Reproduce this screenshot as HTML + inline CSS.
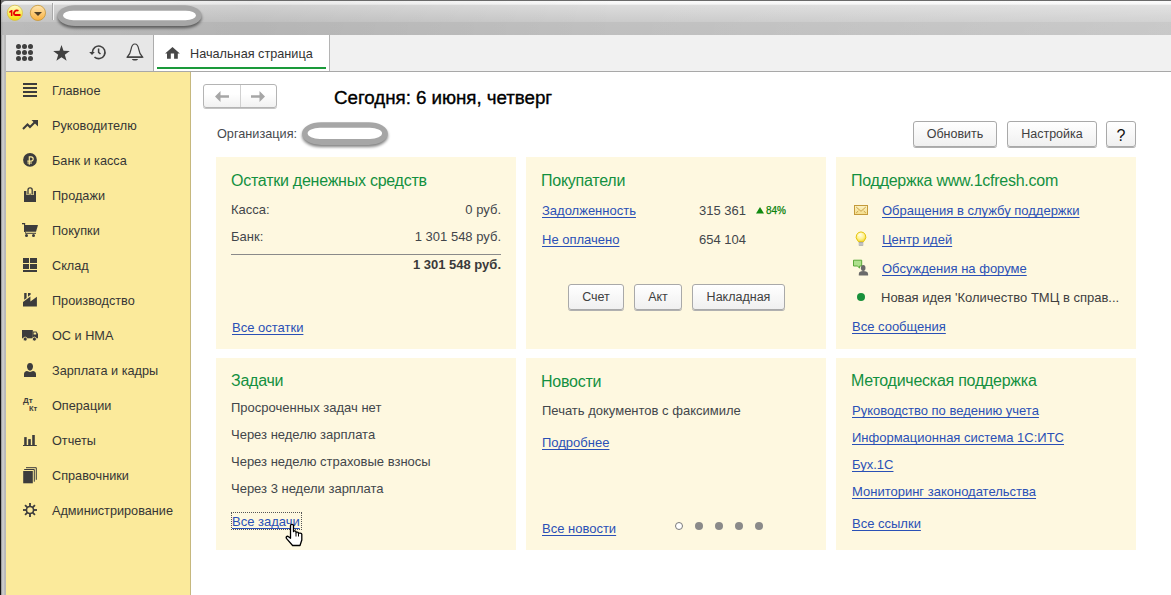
<!DOCTYPE html>
<html><head><meta charset="utf-8">
<style>
*{margin:0;padding:0;box-sizing:border-box}
html,body{width:1171px;height:595px;overflow:hidden;background:#fff;font-family:"Liberation Sans",sans-serif;position:relative}
.a{position:absolute}
.t{position:absolute;white-space:nowrap;line-height:1;font-size:13px;color:#42464b}
.lk{color:#2a50b6;text-decoration:underline;text-underline-offset:2px;text-decoration-skip-ink:none}
.ttl{font-size:16px;letter-spacing:-0.25px;color:#139040}
.card{position:absolute;background:#fef8e0}
.btn{position:absolute;border:1px solid #a9a9a9;border-radius:3px;background:linear-gradient(#ffffff,#f0f0f0);box-shadow:0 1px 0 #b0b0b0;font-size:12.5px;color:#404040;text-align:center;line-height:25px}
.si{position:absolute;left:52px;font-size:12.7px;color:#363636;line-height:1;white-space:nowrap}
</style></head><body>
<!-- window frame -->
<div class="a" style="left:0;top:0;width:1171px;height:35px;background:#6a6a6a"></div>
<div class="a" style="left:1px;top:1px;width:1170px;height:34px;border-top-left-radius:5px;background:linear-gradient(#fafafa 0,#f7f7f7 3px,#dcdcdc 4.5px,#cbcbcb 20.5px,#c1c1c1 21px,#bfbfbf 34px)"></div>
<div class="a" style="left:1px;top:1px;width:1170px;height:34px;border-top-left-radius:5px;background:linear-gradient(90deg,rgba(0,0,0,.03) 0,rgba(0,0,0,.06) 250px,rgba(0,0,0,0) 620px,rgba(255,255,255,.14) 1171px)"></div>
<div class="a" style="left:0;top:0;width:1px;height:595px;background:#141414"></div>
<div class="a" style="left:1px;top:35px;width:5px;height:560px;background:linear-gradient(90deg,#888 0,#c2c2c2 25%,#d0d0d0 45%,#bcbcbc 65%,#b6b6b6 100%)"></div>
<div class="a" style="left:1px;top:5px;width:2px;height:30px;background:linear-gradient(90deg,rgba(0,0,0,.12),rgba(0,0,0,0))"></div>
<!-- title bar elements -->
<svg class="a" style="left:6px;top:4px" width="44" height="18" viewBox="0 0 44 18">
<defs><linearGradient id="gy" x1="0" y1="0" x2="0" y2="1"><stop offset="0" stop-color="#fffbd0"/><stop offset="0.5" stop-color="#fbef60"/><stop offset="1" stop-color="#f5dc00"/></linearGradient>
<linearGradient id="go" x1="0" y1="0" x2="0" y2="1"><stop offset="0" stop-color="#ffe6b0"/><stop offset="1" stop-color="#f9b040"/></linearGradient></defs>
<circle cx="8.9" cy="8.8" r="7.6" fill="url(#gy)" stroke="#d6be48" stroke-width="0.8"/>
<path fill="#e80000" d="M3.2 7.5 L5.4 6 H6.4 V12 H4.9 V8.2 L3.6 9Z"/>
<path fill="none" stroke="#e80000" stroke-width="1.7" d="M8.6 11.2 A3 3 0 0 1 12.5 6.8"/>
<rect x="8.5" y="10" width="6" height="2" fill="#e80000"/>
<circle cx="31.9" cy="8.9" r="7.6" fill="url(#go)" stroke="#c49434" stroke-width="0.8"/>
<path fill="#4e3e26" d="M28 8 H36 L32 12Z"/>
</svg>
<div class="a" style="left:52px;top:3px;width:1px;height:17px;background:#a8a8a8"></div>
<div class="a" style="left:53px;top:3px;width:1px;height:17px;background:#f4f4f4"></div>
<svg class="a" style="left:54px;top:1px" width="152" height="35" viewBox="0 0 152 35"><defs><filter id="sh54" x="-10%" y="-30%" width="120%" height="170%"><feGaussianBlur stdDeviation="1.5"/></filter></defs><path d="M21.18 4.20 H129.92 A17.68 10.40 0 0 1 129.92 25.00 H21.18 A17.68 10.40 0 0 1 21.18 4.20Z" fill="#000" opacity=".5" transform="translate(0 2.2)" filter="url(#sh54)"/><path d="M21.18 4.20 H129.92 A17.68 10.40 0 0 1 129.92 25.00 H21.18 A17.68 10.40 0 0 1 21.18 4.20Z" fill="#a6a6a6"/><path d="M19.45 9.70 H131.55 A10.45 4.75 0 0 1 131.55 19.20 H19.45 A10.45 4.75 0 0 1 19.45 9.70Z" fill="#fff"/></svg>
<!-- toolbar -->
<div class="a" style="left:6px;top:35px;width:1165px;height:36px;background:#f1f1f1"></div>
<div class="a" style="left:6px;top:35px;width:147px;height:36px;background:#e7e7e7"></div>
<div class="a" style="left:6px;top:71px;width:1165px;height:1px;background:#a8a8a8"></div>
<div class="a" style="left:153px;top:35px;width:1px;height:36px;background:#acacac"></div>
<div class="a" style="left:154px;top:35px;width:175px;height:36px;background:#fff"></div>
<div class="a" style="left:329px;top:35px;width:1px;height:36px;background:#b4b4b4"></div>
<div class="a" style="left:157px;top:67px;width:169px;height:2px;background:#1a9a3a"></div>
<div class="t" style="left:190px;top:48px;font-size:12.7px;color:#333">Начальная страница</div>
<!-- toolbar icons -->
<svg class="a" style="left:16px;top:44px" width="17" height="17" viewBox="0 0 17 17"><g fill="#404040"><circle cx="2.5" cy="2.5" r="2.5"/><circle cx="8.5" cy="2.5" r="2.5"/><circle cx="14.5" cy="2.5" r="2.5"/><circle cx="2.5" cy="8.5" r="2.5"/><circle cx="8.5" cy="8.5" r="2.5"/><circle cx="14.5" cy="8.5" r="2.5"/><circle cx="2.5" cy="14.5" r="2.5"/><circle cx="8.5" cy="14.5" r="2.5"/><circle cx="14.5" cy="14.5" r="2.5"/></g></svg>
<svg class="a" style="left:53px;top:45px" width="17" height="16" viewBox="0 0 17 16"><path fill="#404040" d="M8.5 0 L10.5 5.8 L16.8 5.9 L11.8 9.7 L13.6 15.8 L8.5 12.2 L3.4 15.8 L5.2 9.7 L0.2 5.9 L6.5 5.8Z"/></svg>
<svg class="a" style="left:86px;top:42px" width="24" height="20" viewBox="0 0 24 20"><path fill="none" stroke="#404040" stroke-width="1.6" d="M8.48 15.03 A6.3 6.3 0 1 0 6.4 10.35"/><path fill="#404040" d="M3.2 10 H8.8 L6 12.9Z"/><path fill="none" stroke="#404040" stroke-width="1.5" d="M12.6 6.6 V10.4 L14.5 12"/></svg>
<svg class="a" style="left:123px;top:41px" width="24" height="22" viewBox="0 0 24 22"><path fill="#ececec" stroke="#404040" stroke-width="1.2" d="M11.9 3 C10 3 8.6 4.8 8.1 8.2 C7.6 11.8 6.2 14 4.3 16 H19.5 C17.6 14 16.2 11.8 15.7 8.2 C15.2 4.8 13.8 3 11.9 3Z"/><rect x="4" y="15.5" width="15.8" height="1.4" fill="#404040"/><path fill="#404040" d="M8.9 17.9 H15 C14.6 20.1 9.3 20.1 8.9 17.9Z"/></svg>
<svg class="a" style="left:165px;top:47px" width="15" height="12" viewBox="0 0 15 12"><path fill="#484848" d="M7.5 0 L14.8 6.6 H12.8 V11.8 H9.1 V6.5 H5.8 V11.8 H2 V6.6 H0.1Z"/></svg>
<!-- sidebar -->
<div class="a" style="left:6px;top:72px;width:184px;height:523px;background:#fbea9b"></div>
<div class="a" style="left:190px;top:72px;width:1px;height:523px;background:#c6b87e"></div>
<!-- sidebar items -->
<svg class="a" style="left:23px;top:83px" width="14" height="14" viewBox="0 0 14 14"><g fill="#3c3c3c"><rect x="0" y="0" width="14" height="2"/><rect x="0" y="4" width="14" height="2"/><rect x="0" y="8" width="14" height="2"/><rect x="0" y="12" width="14" height="2"/></g></svg>
<div class="si" style="top:85px">Главное</div>
<svg class="a" style="left:22px;top:120px" width="16" height="10" viewBox="0 0 16 10"><path fill="none" stroke="#3c3c3c" stroke-width="2" d="M1 9 L5.5 4.5 L8 7 L13.5 1.5"/><path fill="#3c3c3c" d="M9.5 0 L16 0 L16 6.5Z"/></svg>
<div class="si" style="top:120px">Руководителю</div>
<svg class="a" style="left:22px;top:152px" width="16" height="16" viewBox="0 0 16 16"><circle cx="8" cy="7.9" r="6.9" fill="#3c3c3c"/><path fill="none" stroke="#fbea9b" stroke-width="1.15" d="M7.3 12.8 V4.9 H9.1 A2.1 2.1 0 0 1 9.1 9.1 H5.3 M5.3 11 H10"/></svg>
<div class="si" style="top:155px">Банк и касса</div>
<svg class="a" style="left:23px;top:186px" width="14" height="17" viewBox="0 0 14 17"><rect x="1" y="5" width="12" height="11" fill="#3c3c3c"/><path fill="none" stroke="#fbea9b" stroke-width="3.2" d="M5 9 V4 A2 2 0 0 1 9.2 4 V9"/><rect x="5.6" y="4.5" width="3" height="3" fill="#fbea9b"/><path fill="none" stroke="#3c3c3c" stroke-width="1.3" d="M5 8.5 V4 A2.1 2.1 0 0 1 9.2 4 V8.5"/></svg>
<div class="si" style="top:190px">Продажи</div>
<svg class="a" style="left:21px;top:222px" width="18" height="16" viewBox="0 0 18 16"><g fill="#3c3c3c"><rect x="1" y="1" width="3.1" height="1.3"/><rect x="3" y="1" width="1.1" height="9"/><path d="M3 3 H17 L15 9.7 H3Z"/><rect x="4.3" y="10.8" width="10.7" height="1"/><rect x="4.2" y="9.5" width="0.7" height="1.8"/><circle cx="5.5" cy="13.6" r="1.5"/><circle cx="12.5" cy="13.6" r="1.5"/></g></svg>
<div class="si" style="top:225px">Покупки</div>
<svg class="a" style="left:23px;top:258px" width="14" height="14" viewBox="0 0 14 14"><g fill="#3c3c3c"><rect x="0" y="0" width="6" height="5"/><rect x="7" y="0" width="7" height="5"/><rect x="0" y="6" width="6" height="5"/><rect x="7" y="6" width="7" height="5"/><rect x="0" y="12" width="14" height="2"/></g></svg>
<div class="si" style="top:260px">Склад</div>
<svg class="a" style="left:23px;top:292px" width="15" height="16" viewBox="0 0 15 16"><g fill="#3c3c3c"><path d="M0 10 L7.4 4.4 V9.4 L13.9 4.8 V14.6 H0Z"/><path d="M1.2 1 H3.6 V5.9 L1.2 7.7Z"/><path d="M5 1 H7.6 V2.85 L5 4.8Z"/></g></svg>
<div class="si" style="top:295px">Производство</div>
<svg class="a" style="left:21px;top:328px" width="18" height="14" viewBox="0 0 18 14"><g fill="#3c3c3c"><rect x="1" y="2" width="10.8" height="8.3"/><path d="M11.8 3.5 H15.5 L17 6 V10.3 H11.8Z"/></g><rect x="12.6" y="4.5" width="2.6" height="2" fill="#fbea9b"/><circle cx="4.2" cy="11.1" r="2" fill="#3c3c3c" stroke="#fbea9b" stroke-width=".8"/><circle cx="13.4" cy="11.1" r="2" fill="#3c3c3c" stroke="#fbea9b" stroke-width=".8"/></svg>
<div class="si" style="top:330px">ОС и НМА</div>
<svg class="a" style="left:23px;top:362px" width="14" height="16" viewBox="0 0 14 16"><g fill="#3c3c3c"><path d="M7 1 C9 1 10 2.6 10 4.6 C10 6.8 8.6 8.7 7 8.7 C5.4 8.7 4 6.8 4 4.6 C4 2.6 5 1 7 1Z"/><path d="M1 15 V12.2 C1 10.3 2.4 9.2 4 9.1 C5 9.6 6 9.9 7 9.9 C8 9.9 9 9.6 10 9.1 C11.6 9.2 13 10.3 13 12.2 V15Z"/></g></svg>
<div class="si" style="top:365px">Зарплата и кадры</div>
<div class="a" style="left:23px;top:396px;font:bold 8px 'Liberation Sans';color:#3c3c3c;line-height:10px">Дт</div>
<div class="a" style="left:29px;top:404px;font:bold 7.5px 'Liberation Sans';color:#3c3c3c;line-height:10px">Кт</div>
<div class="si" style="top:400px">Операции</div>
<svg class="a" style="left:23px;top:434px" width="14" height="13" viewBox="0 0 14 13"><g fill="#3c3c3c"><rect x="1.2" y="3.1" width="2.5" height="8"/><rect x="5.2" y="5.1" width="2.6" height="6"/><rect x="9.2" y="1" width="2.6" height="10"/><rect x="0" y="11" width="13.8" height="1"/></g></svg>
<div class="si" style="top:435px">Отчеты</div>
<svg class="a" style="left:23px;top:466px" width="15" height="18" viewBox="0 0 15 18"><rect x="0.2" y="5" width="9.6" height="12.3" fill="#3c3c3c"/><path fill="none" stroke="#3c3c3c" stroke-width="1" d="M1.2 3.5 H11.3 V15.7 M3 1.7 H13.3 V13.8"/></svg>
<div class="si" style="top:470px">Справочники</div>
<svg class="a" style="left:23px;top:503px" width="14" height="14" viewBox="0 0 14 14"><g fill="#3c3c3c"><rect x="6.1" y="0" width="1.8" height="3.6" transform="rotate(0 7 7)"/><rect x="6.1" y="0" width="1.8" height="3.6" transform="rotate(45 7 7)"/><rect x="6.1" y="0" width="1.8" height="3.6" transform="rotate(90 7 7)"/><rect x="6.1" y="0" width="1.8" height="3.6" transform="rotate(135 7 7)"/><rect x="6.1" y="0" width="1.8" height="3.6" transform="rotate(180 7 7)"/><rect x="6.1" y="0" width="1.8" height="3.6" transform="rotate(225 7 7)"/><rect x="6.1" y="0" width="1.8" height="3.6" transform="rotate(270 7 7)"/><rect x="6.1" y="0" width="1.8" height="3.6" transform="rotate(315 7 7)"/></g><circle cx="7" cy="7" r="3.55" fill="none" stroke="#3c3c3c" stroke-width="1.6"/></svg>
<div class="si" style="top:505px">Администрирование</div>
<!-- main header -->
<div class="a" style="left:203px;top:84px;width:74px;height:24px;border:1px solid #b4b4b4;border-radius:3px;background:linear-gradient(#fff 40%,#f1f1f1);box-shadow:0 1px 0 #c4c4c4"></div>
<div class="a" style="left:240px;top:85px;width:1px;height:22px;background:#d0d0d0"></div>
<svg class="a" style="left:215px;top:91px" width="14" height="11" viewBox="0 0 14 11"><path fill="#a6a6a6" d="M0 5.5 L5.5 0 V4.3 H14 V6.7 H5.5 V11Z"/></svg>
<svg class="a" style="left:251px;top:91px" width="14" height="11" viewBox="0 0 14 11"><path fill="#a6a6a6" d="M14 5.5 L8.5 0 V4.3 H0 V6.7 H8.5 V11Z"/></svg>
<div class="t" style="left:334px;top:89px;font-size:18.8px;letter-spacing:-0.05px;color:#000;-webkit-text-stroke:0.35px #000">Сегодня: 6 июня, четверг</div>
<div class="t" style="left:217px;top:128px;font-size:12.7px;color:#474a4e">Организация:</div>
<svg class="a" style="left:298px;top:118px" width="94" height="37" viewBox="0 0 94 37"><defs><filter id="sh298" x="-10%" y="-30%" width="120%" height="170%"><feGaussianBlur stdDeviation="1.5"/></filter></defs><path d="M23.21 4.30 H70.69 A19.21 11.30 0 0 1 70.69 26.90 H23.21 A19.21 11.30 0 0 1 23.21 4.30Z" fill="#000" opacity=".5" transform="translate(0 2.2)" filter="url(#sh298)"/><path d="M23.21 4.30 H70.69 A19.21 11.30 0 0 1 70.69 26.90 H23.21 A19.21 11.30 0 0 1 23.21 4.30Z" fill="#a6a6a6"/><path d="M21.81 9.80 H71.89 A12.21 5.55 0 0 1 71.89 20.90 H21.81 A12.21 5.55 0 0 1 21.81 9.80Z" fill="#fff"/></svg>
<div class="btn" style="left:913px;top:121px;width:84px;height:26px">Обновить</div>
<div class="btn" style="left:1007px;top:121px;width:90px;height:26px">Настройка</div>
<div class="btn" style="left:1106px;top:121px;width:30px;height:26px;font-size:16px;color:#111;line-height:27px">?</div>
<!-- cards -->
<div class="card" style="left:216px;top:157px;width:300px;height:192px"></div>
<div class="card" style="left:526px;top:157px;width:300px;height:192px"></div>
<div class="card" style="left:836px;top:157px;width:300px;height:192px"></div>
<div class="card" style="left:216px;top:358px;width:300px;height:192px"></div>
<div class="card" style="left:526px;top:358px;width:300px;height:192px"></div>
<div class="card" style="left:836px;top:358px;width:300px;height:192px"></div>
<!-- card 1 -->
<div class="t ttl" style="left:231px;top:173px">Остатки денежных средств</div>
<div class="t" style="left:231px;top:203px">Касса:</div>
<div class="t" style="left:231px;top:230px">Банк:</div>
<div class="t" style="right:670px;top:203px">0 руб.</div>
<div class="t" style="right:670px;top:230px">1 301 548 руб.</div>
<div class="a" style="left:231px;top:254px;width:270px;height:1px;background:#8a8a8a"></div>
<div class="t" style="right:670px;top:258px;font-weight:bold;color:#3a3a3a">1 301 548 руб.</div>
<div class="t lk" style="left:232px;top:321px">Все остатки</div>
<!-- card 2 -->
<div class="t ttl" style="left:541px;top:173px">Покупатели</div>
<div class="t lk" style="left:542px;top:204px">Задолженность</div>
<div class="t" style="left:699px;top:204px">315 361</div>
<svg class="a" style="left:756px;top:207px" width="8" height="7" viewBox="0 0 8 7"><path d="M4 0 L8 6.6 H0Z" fill="#108a10"/></svg><div class="t" style="left:766px;top:206px;font-size:10px;color:#0c820c;-webkit-text-stroke:0.25px #0c820c">84%</div>
<div class="t lk" style="left:542px;top:233px">Не оплачено</div>
<div class="t" style="left:699px;top:233px">654 104</div>
<div class="btn" style="left:568px;top:284px;width:56px;height:26px">Счет</div>
<div class="btn" style="left:634px;top:284px;width:48px;height:26px">Акт</div>
<div class="btn" style="left:692px;top:284px;width:93px;height:26px">Накладная</div>
<!-- card 3 -->
<div class="t ttl" style="left:851px;top:173px">Поддержка www.1cfresh.com</div>
<svg class="a" style="left:854px;top:205px" width="14" height="10" viewBox="0 0 14 10"><defs><linearGradient id="ge" x1="0" y1="0" x2="0" y2="1"><stop offset="0" stop-color="#fdf3c4"/><stop offset="1" stop-color="#f3dc8a"/></linearGradient></defs><rect x=".5" y=".5" width="13" height="9" fill="url(#ge)" stroke="#c49a3a"/><path fill="none" stroke="#c49a3a" stroke-width=".9" d="M2.2 2 L7 6.3 L11.8 2 M2.2 7.9 L4.3 6 M11.8 7.9 L9.7 6"/></svg>
<div class="t lk" style="left:882px;top:204px">Обращения в службу поддержки</div>
<svg class="a" style="left:855px;top:231px" width="12" height="16" viewBox="0 0 12 16"><defs><radialGradient id="gb" cx=".45" cy=".35" r=".6"><stop offset="0" stop-color="#fffde0"/><stop offset=".6" stop-color="#fff190"/><stop offset="1" stop-color="#f5dc40"/></radialGradient></defs><path d="M6 0.9 A5 5 0 0 1 9.6 9.2 L8.3 10.9 H3.7 L2.4 9.2 A5 5 0 0 1 6 0.9Z" fill="url(#gb)" stroke="#e2c000" stroke-width=".9"/><path fill="none" stroke="#fffef0" stroke-width=".8" d="M3.5 5 A2.6 2.6 0 0 1 6.5 2.8"/><rect x="3.8" y="10.9" width="4.4" height="3.8" fill="#a0a0a0"/><rect x="3.8" y="11.8" width="4.4" height=".8" fill="#d8d8d8"/><rect x="3.8" y="13.2" width="4.4" height=".7" fill="#cfcfcf"/></svg>
<div class="t lk" style="left:882px;top:233px">Центр идей</div>
<svg class="a" style="left:853px;top:259px" width="16" height="17" viewBox="0 0 16 17"><path d="M0.5 1.2 H8.7 V7 H6.6 L6.5 9.2 L4.6 7 H0.5Z" fill="#ade08c" stroke="#4ea02c" stroke-width=".9"/><ellipse cx="10.2" cy="9" rx="2.3" ry="3" fill="#6a6a6a"/><path d="M5.8 16.5 V15 C5.8 12.8 7.5 12 10.2 12 C12.9 12 15.1 12.8 15.1 15 V16.5Z" fill="#6a6a6a"/></svg>
<div class="t lk" style="left:882px;top:262px">Обсуждения на форуме</div>
<div class="a" style="left:857px;top:293px;width:8px;height:8px;border-radius:50%;background:#18903a"></div>
<div class="t" style="left:881px;top:291px;color:#404040">Новая идея 'Количество ТМЦ в справ...</div>
<div class="t lk" style="left:852px;top:320px">Все сообщения</div>
<!-- card 4 -->
<div class="t ttl" style="left:231px;top:373px">Задачи</div>
<div class="t" style="left:231px;top:401px">Просроченных задач нет</div>
<div class="t" style="left:231px;top:428px">Через неделю зарплата</div>
<div class="t" style="left:231px;top:455px">Через неделю страховые взносы</div>
<div class="t" style="left:231px;top:482px">Через 3 недели зарплата</div>
<div class="a" style="left:231px;top:512px;width:71px;height:18px;border:1px dotted #555"></div>
<div class="t lk" style="left:232px;top:515px;text-underline-offset:1.5px">Все задачи</div>
<!-- card 5 -->
<div class="t ttl" style="left:541px;top:374px">Новости</div>
<div class="t" style="left:542px;top:404px">Печать документов с факсимиле</div>
<div class="t lk" style="left:542px;top:436px">Подробнее</div>
<div class="t lk" style="left:542px;top:522px">Все новости</div>
<div class="a" style="left:675px;top:522px;width:8px;height:8px;border-radius:50%;border:1px solid #7a7a7a;background:#fff"></div>
<div class="a" style="left:695px;top:522px;width:8px;height:8px;border-radius:50%;background:#8a8a8a"></div>
<div class="a" style="left:715px;top:522px;width:8px;height:8px;border-radius:50%;background:#8a8a8a"></div>
<div class="a" style="left:735px;top:522px;width:8px;height:8px;border-radius:50%;background:#8a8a8a"></div>
<div class="a" style="left:755px;top:522px;width:8px;height:8px;border-radius:50%;background:#8a8a8a"></div>
<!-- card 6 -->
<div class="t ttl" style="left:851px;top:373px">Методическая поддержка</div>
<div class="t lk" style="left:852px;top:404px">Руководство по ведению учета</div>
<div class="t lk" style="left:852px;top:431px">Информационная система 1С:ИТС</div>
<div class="t lk" style="left:852px;top:458px">Бух.1С</div>
<div class="t lk" style="left:852px;top:485px">Мониторинг законодательства</div>
<div class="t lk" style="left:852px;top:517px">Все ссылки</div>
<!-- cursor -->
<svg class="a" style="left:285px;top:523px" width="20" height="25" viewBox="0 0 20 25"><path fill="#fff" stroke="#000" stroke-width="1.3" stroke-linejoin="round" d="M5.5 2.6 C5.5 0.9 8.5 0.9 8.5 2.6 V8.6 C8.6 7.6 11 7.6 11 9 V9.8 C11.1 8.8 13.5 8.8 13.5 10.1 V10.8 C13.6 9.8 16.8 9.8 16.8 11.3 V17 L15 22.5 H7.6 L1.6 15.6 C0.6 14.3 1.7 12.5 3.6 13.7 L5.5 15.2 Z"/><path stroke="#000" stroke-width="1" d="M11 10 V13.5 M13.5 11 V13.5"/></svg>
</body></html>
